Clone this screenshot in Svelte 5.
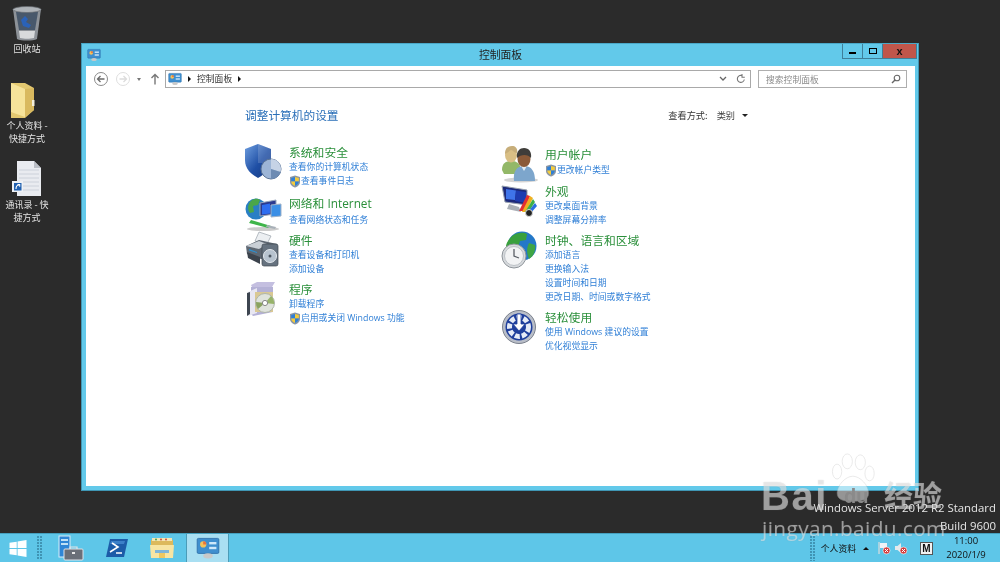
<script>
  const col1 = [
    { icon: 'security', title: '系统和安全', mt: 0, links: [{ t: '查看你的计算机状态' }, { t: '查看事件日志', shield: true }] },
    { icon: 'network', title: '网络和 Internet', mt: 7, gap: 2, links: [{ t: '查看网络状态和任务' }] },
    { icon: 'hardware', title: '硬件', mt: 5, links: [{ t: '查看设备和打印机' }, { t: '添加设备' }] },
    { icon: 'programs', title: '程序', mt: 5, links: [{ t: '卸载程序' }, { t: '启用或关闭 Windows 功能', shield: true }] }
  ];
  const col2 = [
    { icon: 'users', title: '用户帐户', mt: 2, gap: 1, links: [{ t: '更改帐户类型', shield: true }] },
    { icon: 'appearance', title: '外观', mt: 6, links: [{ t: '更改桌面背景' }, { t: '调整屏幕分辨率' }] },
    { icon: 'clock', title: '时钟、语言和区域', mt: 5, links: [{ t: '添加语言' }, { t: '更换输入法' }, { t: '设置时间和日期' }, { t: '更改日期、时间或数字格式' }] },
    { icon: 'ease', title: '轻松使用', mt: 5, links: [{ t: '使用 Windows 建议的设置' }, { t: '优化视觉显示' }] }
  ];
</script>

{#snippet cpIcon(size)}
  <svg width={size} height={size} viewBox="0 0 20 20">
    <rect x="1" y="2" width="18" height="12.5" rx="1" fill="#3f8fcf" stroke="#2c6ea8" stroke-width=".7"/>
    <circle cx="6" cy="7" r="2.6" fill="#f4c25a"/>
    <path d="M6 7V4.4A2.6 2.6 0 0 1 8.6 7Z" fill="#e9713f"/>
    <rect x="11" y="5" width="6" height="2" fill="#cfe8fa"/>
    <rect x="11" y="9" width="6" height="2" fill="#cfe8fa"/>
    <ellipse cx="10" cy="16.5" rx="4" ry="2.2" fill="#c9c9c9"/>
  </svg>
{/snippet}

{#snippet uacShield()}
  <svg class="uac" width="12" height="13" viewBox="0 0 12 13">
    <path d="M6 .5 11 2v5c0 3-2.500 4.700-5 5.500C3.500 11.700 1 10 1 7V2Z" fill="#8b96a3"/>
    <path d="M6 2v4.500H2.200V2.900Z" fill="#2f7fd6"/>
    <path d="M6 2l3.800.9v3.600H6Z" fill="#f3cb3c"/>
    <path d="M6 6.500h3.800c-.1 2.200-1.900 3.600-3.800 4.300Z" fill="#2f7fd6"/>
    <path d="M6 6.500v4.300c-1.900-.7-3.700-2.100-3.800-4.300Z" fill="#f3cb3c"/>
  </svg>
{/snippet}

{#snippet bigIcon(name)}
  <svg class="big" width="38" height="38" viewBox="0 0 38 38">
    {#if name === 'security'}
      <path d="M13 1 26 6v11c0 9-6 14-13 18C6 31 0 26 0 17V6Z" fill="url(#sh)"/>
      <path d="M13 1 26 6v11c0 1-.1 2-.3 3L13 20Z" fill="#fff" opacity=".16"/>
      <circle cx="26" cy="26" r="10" fill="#9db5d6" stroke="#5a7396" stroke-width="1"/>
      <path d="M26 26V16a10 10 0 0 1 9.500 13Z" fill="#c6d3e6"/>
      <path d="M26 26l9.500 3a10 10 0 0 1-9.500 7Z" fill="#6d8bb3"/>
    {:else if name === 'network'}
      <ellipse cx="18" cy="35" rx="16" ry="2" fill="#ccc"/>
      <circle cx="11" cy="15" r="10.500" fill="#2a7fc4"/>
      <path d="M5 8c3-4 8-4 10-2l-2 5-5 1 1 6-4 1c-3-4-2-8 0-11Z" fill="#4aa64a"/>
      <path d="M15 9 31 6v14l-16 2Z" fill="#2b3a8f" stroke="#99a7bd"/>
      <path d="M17 11 25 9.500v10l-8 1Z" fill="#2e6df0"/>
      <path d="M26 11l10-1v12l-10 1Z" fill="#3b8fe6" stroke="#9fb2c9"/>
      <path d="M6 26l20 6-3 2L4 29Z" fill="#3fb54a"/>
      <path d="M22 31l9 2-1 2-9-2Z" fill="#a8b0b8"/>
    {:else if name === 'hardware'}
      <path d="M14 1 26 5 22 13 10 10Z" fill="#eceff2" stroke="#9aa2ab" stroke-width=".7"/>
      <path d="M1 15 14 9l18 4v15H16L2 23Z" fill="#5e6772"/>
      <path d="M1 15 14 10l8 3-8 5Z" fill="#c9cfd6"/>
      <path d="M2 21 15 26v7L3 27Z" fill="#3c434c"/>
      <path d="M4 18l8 3v1l-8-2.500Z" fill="#2c8fd0"/>
      <rect x="17" y="13" width="16" height="22" rx="2" fill="#66727f" stroke="#3f4852" stroke-width=".7"/>
      <circle cx="25" cy="25" r="6.500" fill="#b7c3cf" stroke="#e4e9ee"/>
      <circle cx="25" cy="25" r="1.500" fill="#4a5560"/>
    {:else if name === 'programs'}
      <path d="M6 5 12 2h18l-3 5H7Z" fill="#c4bfe0"/>
      <path d="M6 7h22v25l-20 4-2-2Z" fill="#b4b1d6"/>
      <path d="M3 12 12 8v25l-9 3Z" fill="#e8e7f2"/>
      <path d="M2 13l3-1v22l-3 2Z" fill="#3d4550"/>
      <path d="M10 12h18v20H10Z" fill="#d9c894"/>
      <circle cx="20" cy="23" r="9.500" fill="#dfe3dc" stroke="#aeb5aa"/>
      <path d="M20 23l6-7a9.500 9.500 0 0 1 3 8Z" fill="#97b36a"/>
      <path d="M20 23l-7 6a9.500 9.500 0 0 1-2-7Z" fill="#8aa35f"/>
      <circle cx="20" cy="23" r="2.600" fill="#fff" stroke="#888"/>
    {:else if name === 'users'}
      <ellipse cx="20" cy="35" rx="17" ry="2.500" fill="#d4d4d4"/>
      <path d="M1 25c0-7 4-9 9-9s8 2 9 5v8H3Z" fill="#93b868"/>
      <ellipse cx="10" cy="10" rx="6" ry="7.500" fill="#d9bf85"/>
      <path d="M4 9c0-6 3-8 7-8s6 3 5 7c-3 0-4-3-6-3-2 1-3 3-6 4Z" fill="#c7ae7a"/>
      <path d="M13 36c-1-9 2-15 10-15s11 6 11 15Z" fill="#7da6cc"/>
      <path d="M20 21l3 5 3-5Z" fill="#e3ecf4"/>
      <ellipse cx="23" cy="14" rx="6.500" ry="8" fill="#8b5a38"/>
      <path d="M16 13c-1-7 3-10 7-10 5 0 8 4 7 10-3-4-10-4-14 0Z" fill="#3f3d3a"/>
    {:else if name === 'appearance'}
      <path d="M1 4 26 8v15L4 20Z" fill="#1d2a7a" stroke="#98a2b0"/>
      <path d="M5 7 15 8.500 14 18l-9-1Z" fill="#3f74ea"/>
      <path d="M15 8.500 25 10v11l-11-2Z" fill="#1e3bb0"/>
      <path d="M8 22l10 3 2 5-14-3Z" fill="#aab0b7"/>
      <path d="M18 29 26 13l3 1-5 15Z" fill="#e33030"/>
      <path d="M21 30 29 14l3 2-7 14Z" fill="#f0b020"/>
      <path d="M24 30 32 17l2 3-7 11Z" fill="#3eb04a"/>
      <path d="M26 31 34 21l2 3-7 8Z" fill="#2a6fe0"/>
      <circle cx="28" cy="31" r="3.500" fill="#222" stroke="#ddd"/>
    {:else if name === 'clock'}
      <circle cx="21" cy="15" r="14.500" fill="#2478c8"/>
      <path d="M11 5c5-4 12-4 15-2l-1 6-6 1-2 7-6 2c-1-3-3-4-6-3 0-4 3-8 6-11Z" fill="#39a03d"/>
      <path d="M28 12l6 2c1 6-2 12-6 14-2-5-3-10 0-16Z" fill="#3fa545"/>
      <circle cx="13" cy="25" r="12" fill="#d7dadd" stroke="#8f959b" stroke-width="1"/>
      <circle cx="13" cy="25" r="9.500" fill="#f2f3f4" stroke="#bcc1c6"/>
      <path d="M13 18v7l5 2" fill="none" stroke="#5a5f66" stroke-width="1.300"/>
    {:else}
      <circle cx="18" cy="19" r="16.500" fill="#b9bec8" stroke="#7b818c"/>
      <circle cx="18" cy="19" r="13.500" fill="#1f3f9c"/>
      <circle cx="18" cy="19" r="9.500" fill="none" stroke="#e6ecf7" stroke-width="5" stroke-dasharray="5 2"/>
      <path d="M16 6h4v10h4l-6 7-6-7h4Z" fill="#fff" stroke="#1f3f9c" stroke-width=".8"/>
    {/if}
  </svg>
{/snippet}

{#snippet category(c)}
  <div class="cat" style="margin-top:{c.mt}px">
    <div class="cat-icon">{@render bigIcon(c.icon)}</div>
    <div class="cat-text">
      <div class="cat-title" style="margin-bottom:{c.gap ?? 0}px">{c.title}</div>
      {#each c.links as l}
        <div class="link">{#if l.shield}{@render uacShield()}{/if}<span>{l.t}</span></div>
      {/each}
    </div>
  </div>
{/snippet}

<svg width="0" height="0" class="defs">
  <defs>
    <linearGradient id="sh" x1="0" x2="1" y1="0" y2="1">
      <stop offset="0" stop-color="#6f9fe0"/><stop offset=".55" stop-color="#1f4fa5"/><stop offset="1" stop-color="#16387d"/>
    </linearGradient>
  </defs>
</svg>

<div class="desktop">
  <div class="dicon" style="left:0;top:5px">
    <svg width="32" height="36" viewBox="0 0 32 36">
      <path d="M2 4h28l-4 30c-4 2-16 2-20 0Z" fill="#8d9298"/>
      <path d="M5 7h22l-3 18H8Z" fill="#48586b"/>
      <path d="M8 26h16l-1 7c-4 1-10 1-14 0Z" fill="#d8dadc"/>
      <ellipse cx="16" cy="4.500" rx="14" ry="3" fill="#aeb3b8" stroke="#666a70" stroke-width=".7"/>
      <path d="M10 15l4-4 3 3-2 3 5 3-2 3-6-2Z" fill="#2a62b8"/>
    </svg>
    <div class="dlabel">回收站</div>
  </div>
  <div class="dicon" style="left:-4px;top:82px">
    <svg width="26" height="36" viewBox="0 0 26 36">
      <path d="M1 1h14l9 5v22l-9 8H1Z" fill="#e3c870"/>
      <path d="M1 1l14 6v28L1 30Z" fill="#f6e39a"/>
      <path d="M15 7l9-1v22l-9 7Z" fill="#d9b95f"/>
      <rect x="22" y="18" width="2.500" height="6" fill="#f4efdc"/>
    </svg>
    <div class="dlabel shifted">个人资料 -<br/>快捷方式</div>
  </div>
  <div class="dicon" style="left:0;top:161px">
    <svg width="30" height="36" viewBox="0 0 30 36">
      <path d="M5 0h17l7 7v28H5Z" fill="#e9ebf0"/>
      <path d="M22 0l7 7h-7Z" fill="#b9bdc5"/>
      <path d="M7 9h20M7 13h20M7 17h20M7 21h20M7 25h20M7 29h20" stroke="#ccd1da" stroke-width="1"/>
      <rect x="0" y="20" width="11" height="11" fill="#eef1f5"/>
      <rect x="2" y="22" width="7.500" height="7.500" fill="#2060b0"/>
      <path d="M4 28c0-3 1-4 3-4M5.500 23.500h2.200v2.200" fill="none" stroke="#fff" stroke-width="1.100"/>
    </svg>
    <div class="dlabel">通讯录 - 快<br/>捷方式</div>
  </div>

  <div class="window">
    <div class="titlebar">
      <div class="tb-icon">{@render cpIcon(14)}</div>
      <div class="tb-title">控制面板</div>
      <div class="winbtns">
        <div class="wb"><i class="min"></i></div>
        <div class="wb"><i class="max"></i></div>
        <div class="wb close">x</div>
      </div>
    </div>
    <div class="client">
      <div class="navbar">
        <div class="round"><svg width="14" height="14" viewBox="0 0 14 14"><circle cx="7" cy="7" r="6.500" fill="#fff" stroke="#8a8a8a"/><path d="M3.500 7h7M6.500 4 3.500 7l3 3" fill="none" stroke="#6a6a6a" stroke-width="1.300"/></svg></div>
        <div class="round fwd"><svg width="14" height="14" viewBox="0 0 14 14"><circle cx="7" cy="7" r="6.500" fill="#fff" stroke="#dedede"/><path d="M3.500 7h7M7.500 4l3 3-3 3" fill="none" stroke="#dcdcdc" stroke-width="1.300"/></svg></div>
        <div class="caret-small"></div>
        <svg class="up" width="10" height="12" viewBox="0 0 10 12"><path d="M5 11.500V1.500M1.500 5 5 1.500 8.500 5" fill="none" stroke="#777" stroke-width="1.400"/></svg>
        <div class="addr">
          <div class="addr-ic">{@render cpIcon(14)}</div>
          <i class="tri"></i>
          <span class="crumb">控制面板</span>
          <i class="tri"></i>
          <span class="spacer"></span>
          <svg width="8" height="6" viewBox="0 0 8 6"><path d="M1 1l3 3 3-3" fill="none" stroke="#666" stroke-width="1.300"/></svg>
          <svg class="refresh" width="10" height="10" viewBox="0 0 10 10"><path d="M8.300 5.500A3.500 3.500 0 1 1 6.500 1.800M6 0v3.200h2.800" fill="none" stroke="#777" stroke-width="1.100"/></svg>
        </div>
        <div class="search">
          <span>搜索控制面板</span>
          <svg width="10" height="10" viewBox="0 0 10 10"><circle cx="6" cy="4" r="2.800" fill="none" stroke="#666" stroke-width="1.100"/><path d="M4 6 1 9" stroke="#666" stroke-width="1.500"/></svg>
        </div>
      </div>
      <div class="head">
        <div class="heading">调整计算机的设置</div>
        <div class="viewby"><span class="vb-l">查看方式:</span><span class="vb-v">类别</span><i class="caret"></i></div>
      </div>
      <div class="cols">
        <div class="col c1">{#each col1 as c}{@render category(c)}{/each}</div>
        <div class="col c2">{#each col2 as c}{@render category(c)}{/each}</div>
      </div>
    </div>
  </div>

  <div class="osver">Windows Server 2012 R2 Standard<br/>Build 9600</div>

  <div class="taskbar">
    <div class="start"><svg width="20" height="20" viewBox="0 0 20 20" fill="#fff"><path d="M0 3.200 8.500 2v7.500H0ZM9.500 1.800 20 0v9.500H9.500ZM0 10.500h8.500V18L0 16.800ZM9.500 10.500H20V20L9.500 18.200Z"/></svg></div>
    <div class="grip"></div>
    <div class="tb-app sm">
      <svg width="26" height="26" viewBox="0 0 26 26">
        <rect x="1" y="1" width="11" height="21" fill="#2e86d6" stroke="#d8ecf8"/>
        <rect x="3" y="4" width="7" height="2" fill="#bfe0f5"/><rect x="3" y="8" width="7" height="2" fill="#bfe0f5"/>
        <rect x="6" y="14" width="19" height="11" rx="1" fill="#6a6f78" stroke="#dfe3e8"/>
        <path d="M12 14v-2h7v2" fill="none" stroke="#dfe3e8" stroke-width="1.200"/>
        <rect x="14" y="17" width="3" height="2" fill="#e8e8e8"/>
      </svg>
    </div>
    <div class="tb-app ps">
      <svg width="22" height="18" viewBox="0 0 22 18">
        <path d="M4 0h18l-4 18H0Z" fill="#1c5ca8"/><path d="M5 2h14l-1 3H4Z" fill="#3c80c8"/>
        <path d="M6 4l6 4-8 5" fill="none" stroke="#fff" stroke-width="1.600"/><path d="M10 14h6" stroke="#fff" stroke-width="1.500"/>
      </svg>
    </div>
    <div class="tb-app ex">
      <svg width="24" height="22" viewBox="0 0 24 22">
        <path d="M1 3h22v18H1Z" fill="#dcb95c"/><path d="M2 1h20v3H2Z" fill="#f4e6b4"/>
        <circle cx="6" cy="2.500" r="1" fill="#4a9e4a"/><circle cx="11" cy="2.500" r="1" fill="#d04a3a"/><circle cx="16" cy="2.500" r="1" fill="#d04a3a"/>
        <path d="M0 8h24l-1 13H1Z" fill="#f7e5a3"/>
        <rect x="5" y="13" width="14" height="3" fill="#7fb6d8"/><rect x="9" y="16" width="6" height="5" fill="#eec860"/>
      </svg>
    </div>
    <div class="tb-active">{@render cpIcon(24)}</div>
    <div class="spacer"></div>
    <div class="grip small"></div>
    <div class="tray-label">个人资料</div>
    <i class="tray-up"></i>
    <svg class="tray-ic flag" width="14" height="14" viewBox="0 0 14 14"><path d="M2 1v12" stroke="#ddd" stroke-width="1.200"/><path d="M3 2h7v5H3Z" fill="#eef2f6"/><circle cx="9.500" cy="9.500" r="3.500" fill="#d23b3b" stroke="#fff" stroke-width=".6"/><path d="M8 8l3 3M11 8l-3 3" stroke="#fff"/></svg>
    <svg class="tray-ic" width="14" height="14" viewBox="0 0 14 14"><path d="M1 5h2.500L7 2v10L3.500 9H1Z" fill="#e6e9ec"/><circle cx="9.500" cy="9.500" r="3.500" fill="#d23b3b" stroke="#fff" stroke-width=".6"/><path d="M8 8l3 3M11 8l-3 3" stroke="#fff"/></svg>
    <div class="mbox">M</div>
    <div class="clock">11:00<br/>2020/1/9</div>
  </div>

  <div class="wm">
    <svg class="paw" width="52" height="52" viewBox="0 0 56 56" fill="#fff" stroke="#b4b4b4" stroke-opacity=".6">
      <ellipse cx="13" cy="20" rx="5" ry="8"/><ellipse cx="24" cy="9" rx="5.500" ry="8"/>
      <ellipse cx="38" cy="10" rx="5.500" ry="8"/><ellipse cx="48" cy="22" rx="5" ry="8"/>
      <path d="M30 25c8 0 17 10 17 18 0 8-8 9-17 9s-17-1-17-9c0-8 9-18 17-18Z"/>
    </svg>
    <span class="wm-bai">Bai</span>
    <span class="wm-du">du</span>
    <span class="wm-jy">经验</span>
    <span class="wm-url">jingyan.baidu.com</span>
  </div>
</div>

<style>
  :global(body) { margin: 0; }
  .defs { position: absolute; }
  .desktop {
    position: relative;
    width: 1000px;
    height: 562px;
    overflow: hidden;
    background: #2b2b2b;
    font-family: "Noto Sans CJK SC", "Liberation Sans", sans-serif;
    filter: blur(0.35px);
  }
  .dicon {
    position: absolute;
    width: 54px;
    display: flex;
    flex-direction: column;
    align-items: center;
    gap: 2px;
  }
  .dlabel {
    color: #e2e2e2;
    font-size: 9px;
    line-height: 12.500px;
    text-align: center;
    white-space: nowrap;
    font-family: "Noto Sans CJK SC", sans-serif;
  }
  .dlabel.shifted { transform: translateX(4px); }
  .window {
    position: absolute;
    left: 81px;
    top: 43px;
    width: 838px;
    height: 448px;
    box-sizing: border-box;
    background: #62c9ea;
    border: 1px solid #3f96b4;
    border-top-color: #4aa8c8;
    display: flex;
    flex-direction: column;
    padding: 0 3px 4px 4px;
  }
  .titlebar {
    height: 22px;
    flex: none;
    display: flex;
    align-items: center;
    position: relative;
  }
  .tb-icon { display: flex; margin-left: 1px; }
  .tb-title {
    position: absolute;
    left: 0;
    right: 0;
    top: 2px;
    text-align: center;
    font-size: 10.800px;
    line-height: 16px;
    color: #222;
  }
  .winbtns {
    position: absolute;
    right: -2px;
    top: 0;
    display: flex;
    height: 15px;
    border: 1px solid #3f7f99;
    border-top: 0;
    box-sizing: border-box;
  }
  .wb {
    width: 19px;
    display: flex;
    align-items: center;
    justify-content: center;
    border-right: 1px solid #3f7f99;
  }
  .wb .min { width: 7px; height: 2.500px; margin-top: 4px; background: #000; }
  .wb .max { width: 6px; height: 4px; border: 1.500px solid #000; }
  .wb.close {
    width: 33px;
    border-right: 0;
    background: #c0564b;
    color: #111;
    font: bold 11px/13px "Liberation Sans", sans-serif;
  }
  .client {
    flex: 1;
    background: #fff;
    min-height: 0;
    position: relative;
  }
  .navbar {
    display: flex;
    align-items: center;
    height: 24px;
    margin-top: 1px;
    padding-left: 8px;
  }
  .round { display: flex; width: 14px; height: 14px; }
  .fwd { margin-left: 8px; }
  .caret-small {
    margin-left: 7px;
    border-left: 2.500px solid transparent;
    border-right: 2.500px solid transparent;
    border-top: 3px solid #777;
  }
  .up { margin-left: 9px; }
  .addr {
    margin-left: 5px;
    width: 586px;
    height: 18px;
    box-sizing: border-box;
    border: 1px solid #a9a9a9;
    display: flex;
    align-items: center;
    padding: 0 4px 0 2px;
  }
  .addr-ic { display: flex; }
  .tri {
    margin-left: 6px;
    border-top: 3px solid transparent;
    border-bottom: 3px solid transparent;
    border-left: 3.500px solid #111;
  }
  .crumb { margin-left: 6px; font-size: 8.800px; color: #333; line-height: 14px; }
  .spacer { flex: 1; }
  .refresh { margin-left: 9px; }
  .search {
    margin-left: 7px;
    width: 149px;
    height: 18px;
    box-sizing: border-box;
    border: 1px solid #aeaeae;
    display: flex;
    align-items: center;
    justify-content: space-between;
    padding: 0 5px 0 7px;
    font-size: 8.800px;
    color: #8a8a8a;
  }
  .head {
    position: absolute;
    left: 159px;
    right: 167px;
    top: 41px;
    display: flex;
    justify-content: space-between;
    align-items: center;
    height: 16px;
  }
  .heading { font-size: 11.700px; color: #2a6fb8; line-height: 16px; }
  .viewby { display: flex; align-items: center; font-size: 9.200px; color: #333; }
  .vb-v { margin-left: 9px; color: #444; }
  .caret {
    margin-left: 7px;
    border-left: 3px solid transparent;
    border-right: 3px solid transparent;
    border-top: 3.500px solid #222;
  }
  .cols {
    display: flex;
    padding-left: 159px;
    padding-top: 53px;
  }
  .col { display: flex; flex-direction: column; }
  .c1 { width: 256px; }
  .cat { display: flex; }
  .cat-icon { width: 44px; flex: none; height: 1px; }
  .big { display: block; margin-top: -1px; }
  .cat-text { display: flex; flex-direction: column; }
  .cat-title {
    font-family: "Open Sans", "Noto Sans CJK SC", sans-serif;
    font-size: 11.800px;
    line-height: 16px;
    height: 16px;
    color: #2a8f3a;
    white-space: nowrap;
  }
  .link {
    font-family: "Open Sans", "Noto Sans CJK SC", sans-serif;
    font-size: 8.800px;
    line-height: 14px;
    height: 14px;
    color: #2f7fd6;
    white-space: nowrap;
    display: flex;
    align-items: center;
  }
  .uac { width: 12px; height: 13px; flex: none; }
  .wm { position: absolute; inset: 0; pointer-events: none; }
  .wm span {
    position: absolute;
    color: rgba(255, 255, 255, 0.45);
    white-space: nowrap;
    line-height: 1;
    text-shadow: 0 0 1px rgba(140, 140, 140, 0.4);
  }
  .paw { position: absolute; left: 825px; top: 453px; opacity: .5; }
  .wm-bai { left: 761px; top: 476px; font: 700 40px/1 "Liberation Sans", sans-serif; letter-spacing: 1.500px; }
  .wm span.wm-du { left: 844px; top: 486px; font: 700 20px/1 "Liberation Sans", sans-serif; color: #8a8a8a; text-shadow: none; }
  .wm-jy { left: 884px; top: 480px; font-size: 29px; font-weight: 700; }
  .wm-url { left: 762px; top: 518px; font: 400 20.800px/1 "Open Sans", sans-serif; letter-spacing: .4px; }
  .osver {
    position: absolute;
    right: 4px;
    top: 499px;
    text-align: right;
    color: #e6e6e6;
    font: 400 11.400px/18px "Open Sans", sans-serif;
  }
  .taskbar {
    position: absolute;
    left: 0;
    right: 0;
    bottom: 0;
    height: 29px;
    background: #5ec6e8;
    border-top: 1px solid #45a0bf;
    box-sizing: border-box;
    display: flex;
    align-items: center;
  }
  .start { display: flex; margin-left: 8px; width: 20px; }
  .start svg { width: 20px; height: 17px; }
  .grip {
    margin-left: 9px;
    width: 6px;
    height: 24px;
    background-image: radial-gradient(circle at 1px 1px, #3f94b4 .8px, transparent 1px);
    background-size: 3px 3px;
  }
  .grip.small { width: 6px; height: 25px; margin: 0; }
  .tb-app { display: flex; }
  .sm { margin-left: 15px; }
  .ps { margin-left: 22px; }
  .ex { margin-left: 22px; }
  .tb-active {
    margin-left: 12px;
    width: 43px;
    height: 28px;
    box-sizing: border-box;
    background: #a9dff2;
    border-left: 1px solid #4a9cb8;
    border-right: 1px solid #4a9cb8;
    display: flex;
    align-items: center;
    justify-content: center;
  }
  .tray-label { margin-left: 5px; font-size: 8.800px; color: #111; }
  .tray-up {
    margin-left: 7px;
    border-left: 3px solid transparent;
    border-right: 3px solid transparent;
    border-bottom: 3px solid #111;
  }
  .tray-ic { margin-left: 3px; }
  .tray-ic.flag { margin-left: 8px; }
  .mbox {
    margin-left: 12px;
    width: 13px;
    height: 13px;
    box-sizing: border-box;
    border: 1px solid #555;
    background: #f2f2f2;
    color: #111;
    font: 700 10px/11px "Liberation Sans", sans-serif;
    text-align: center;
  }
  .clock {
    margin-left: 6px;
    width: 54px;
    margin-right: 7px;
    text-align: center;
    color: #111;
    font: 400 9.500px/14px "Open Sans", sans-serif;
  }
</style>
